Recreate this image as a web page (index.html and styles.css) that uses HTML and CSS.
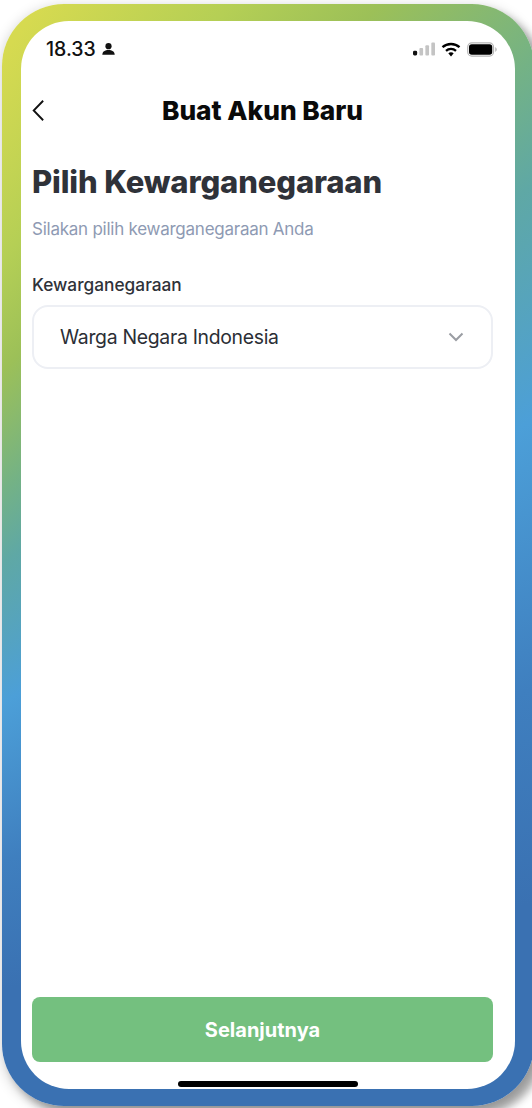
FILE: index.html
```html
<!DOCTYPE html>
<html lang="id">
<head>
<meta charset="utf-8">
<title>Buat Akun Baru</title>
<link rel="stylesheet" href="styles.css">
</head>
<body>
<div class="frame">
  <main class="screen">
    <div class="status">
      <div class="status-left">
        <span class="time">18.33</span>
        <svg class="person" viewBox="0 0 13 12" aria-hidden="true"><circle cx="6.500" cy="3.200" r="3.100"/><path d="M.3 11.800c0-3.300 2.700-4.800 6.200-4.800s6.200 1.500 6.200 4.800z"/></svg>
      </div>
      <div class="status-right">
        <svg class="signal" viewBox="0 0 24 14" aria-hidden="true"><rect x="0" y="9" width="4.500" height="5" rx="1.500" class="on"/><rect x="7" y="6" width="4" height="8" rx="1" class="off"/><rect x="13.500" y="3" width="4" height="11" rx="1" class="off"/><rect x="20" y="0" width="4" height="14" rx="1" class="off"/></svg>
        <svg class="wifi" viewBox="0 0 20 15" aria-hidden="true"><path class="arc" d="M1.500 5.200C6.200 .9 13.800 .9 18.500 5.200"/><path class="arc" d="M5 8.800c2.800-2.500 7.200-2.500 10 0"/><path d="M7.300 11.300c1.500-1.300 3.900-1.300 5.400 0L10 14.600z"/></svg>
        <svg class="battery" viewBox="0 0 33 16" aria-hidden="true"><rect x=".8" y=".8" width="28.400" height="14.400" rx="4.500" class="shell"/><rect x="2.200" y="2.200" width="25.600" height="11.600" rx="3"/><path class="cap" d="M31 5.500c1.100.4 1.800 1.400 1.800 2.500s-.7 2.100-1.800 2.500z"/></svg>
      </div>
    </div>
    <header class="nav">
      <svg class="back" viewBox="0 0 14 24" aria-hidden="true"><path d="M12 1.500 1.800 12 12 22.500"/></svg>
      <h1 class="nav-title">Buat Akun Baru</h1>
    </header>
    <section class="content">
      <h2 class="heading">Pilih Kewarganegaraan</h2>
      <p class="sub">Silakan pilih kewarganegaraan Anda</p>
      <label class="label">Kewarganegaraan</label>
      <div class="select">
        <span>Warga Negara Indonesia</span>
        <svg class="chev" viewBox="0 0 16 10" aria-hidden="true"><path d="M1.500 1.500 8 8l6.500-6.500"/></svg>
      </div>
    </section>
    <footer class="foot">
      <button class="next" type="button">Selanjutnya</button>
      <div class="home"></div>
    </footer>
  </main>
</div>
</body>
</html>
```

FILE: styles.css
```css
html, body {
  margin: 0;
  height: 100%;
  background: #fff;
  overflow: hidden;
}
body {
  font-family: Inter, "Liberation Sans", sans-serif;
  padding: 4px 0 0 2px;
  box-sizing: border-box;
}
.frame {
  width: 532px;
  height: 1102px;
  box-sizing: border-box;
  padding: 17px 19px;
  border-radius: 62px;
  background: conic-gradient(from 0deg at -766px 1106px, #d6da50 36deg, #b5cf55 42deg, #9cc058 46deg, #74b285 51deg, #5fa8a5 54.5deg, #4c9fd8 62deg, #3f7fbf 72deg, #3a71b2 81deg);
  box-shadow: 8px 8px 8px rgba(0, 0, 0, .32), 0 3px 14px rgba(0, 0, 0, .2);
}
.screen {
  width: 494px;
  height: 1068px;
  background: #fff;
  border-radius: 48px;
  display: flex;
  flex-direction: column;
  box-sizing: border-box;
  padding: 0 22px 0 11px;
  overflow: hidden;
}
.status {
  height: 26px;
  margin: 15px -4px 0 0;
  padding-left: 14px;
  display: flex;
  align-items: center;
  justify-content: space-between;
}
.status-left, .status-right {
  display: flex;
  align-items: center;
}
.time {
  font-size: 19.5px;
  font-weight: 500;
  color: #111;
}
.person {
  width: 13px;
  height: 12px;
  margin-left: 6px;
  fill: #111;
}
.signal {
  width: 22px;
  height: 14px;
  margin-right: 6px;
}
.signal .on { fill: #111; }
.signal .off { fill: #c4c4c4; }
.wifi {
  width: 20px;
  height: 15px;
  margin-right: 6px;
  fill: #000;
}
.wifi .arc {
  fill: none;
  stroke: #000;
  stroke-width: 2.300;
}
.battery {
  width: 30px;
  height: 15px;
}
.battery .shell { fill: none; stroke: #b5b5b5; stroke-width: 1.300; }
.battery .cap { fill: #bbb; }
.nav {
  height: 40px;
  margin-top: 28px;
  display: flex;
  align-items: center;
  justify-content: center;
  position: relative;
}
.back {
  position: absolute;
  left: 0;
  top: 9px;
  width: 13px;
  height: 23px;
  fill: none;
  stroke: #111;
  stroke-width: 2;
}
.nav-title {
  margin: 0;
  font-size: 26.3px;
  font-weight: 800;
  color: #0a0a0a;
}
.content {
  flex: 1;
}
.heading {
  margin: 32px 0 0;
  font-size: 31px;
  line-height: 40px;
  font-weight: 800;
  letter-spacing: -.14px;
  color: #2f3239;
}
.sub {
  margin: 17px 0 0;
  font-size: 17px;
  line-height: 20px;
  letter-spacing: -.25px;
  color: #8e9ab3;
}
.label {
  display: block;
  margin-top: 36px;
  font-size: 17.3px;
  line-height: 20px;
  font-weight: 500;
  color: #2f3239;
}
.select {
  margin-top: 10px;
  height: 64px;
  box-sizing: border-box;
  border: 2px solid #edeff4;
  border-radius: 16px;
  padding: 0 27px 0 26px;
  display: flex;
  align-items: center;
  justify-content: space-between;
  font-size: 19.4px;
  letter-spacing: -.3px;
  color: #2b2e35;
}
.chev {
  width: 16px;
  height: 10px;
  fill: none;
  stroke: #9a9da3;
  stroke-width: 2;
}
.foot {
  display: flex;
  flex-direction: column;
  align-items: center;
}
.next {
  width: 100%;
  height: 65px;
  border: 0;
  border-radius: 8px;
  background: #74c07f;
  color: #fff;
  font-family: inherit;
  font-size: 20px;
  font-weight: 700;
}
.home {
  width: 180px;
  height: 6px;
  margin: 19px 0 2px 10px;
  border-radius: 3px;
  background: #000;
}
```
